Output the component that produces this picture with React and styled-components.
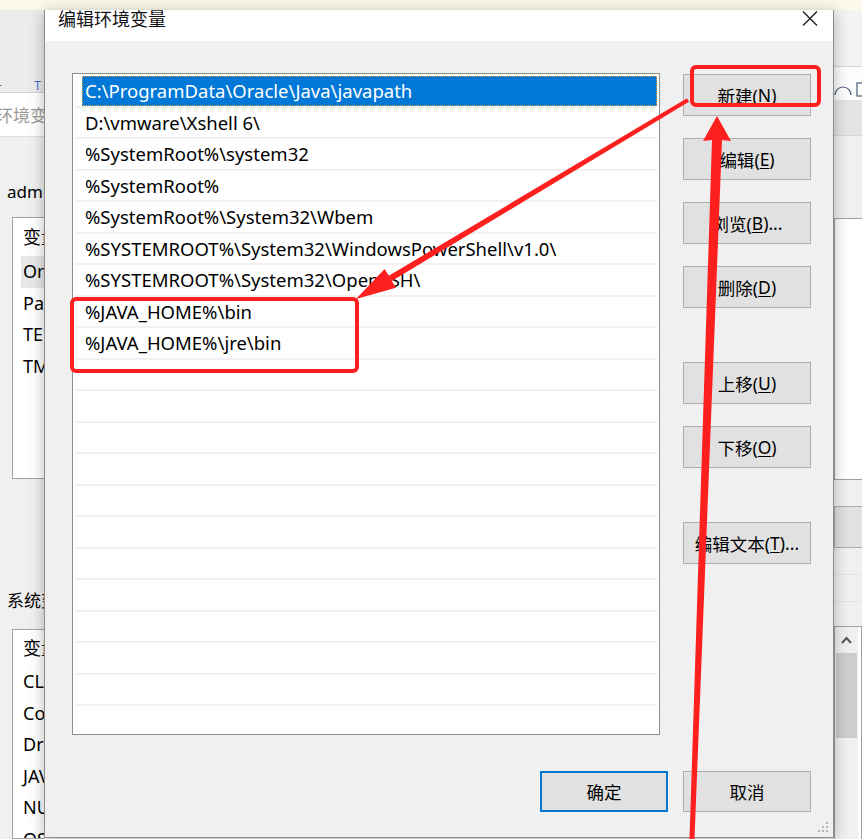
import React from "react";
import styled, { createGlobalStyle } from "styled-components";

const UI_FONT = `"Noto Sans", "Noto Sans CJK SC", sans-serif`;
const RED = "#fe1f1f";

const GlobalStyle = createGlobalStyle`
  html, body {
    margin: 0;
    padding: 0;
  }
  body {
    background: #f0f0f0;
    font-family: ${UI_FONT};
  }
`;

const paths = [
  "C:\\ProgramData\\Oracle\\Java\\javapath",
  "D:\\vmware\\Xshell 6\\",
  "%SystemRoot%\\system32",
  "%SystemRoot%",
  "%SystemRoot%\\System32\\Wbem",
  "%SYSTEMROOT%\\System32\\WindowsPowerShell\\v1.0\\",
  "%SYSTEMROOT%\\System32\\OpenSSH\\",
  "%JAVA_HOME%\\bin",
  "%JAVA_HOME%\\jre\\bin",
];
const ROW_COUNT = 21;

const sideButtons = [
  { label: "新建", key: "N" },
  { label: "编辑", key: "E" },
  { label: "浏览", key: "B", more: true },
  { label: "删除", key: "D" },
  { label: "上移", key: "U", spaced: true },
  { label: "下移", key: "O" },
  { label: "编辑文本", key: "T", more: true, spaced: true },
];

const userVars = ["OneDrive", "Path", "TEMP", "TMP"];
const sysVars = ["CLASSPATH", "ComSpec", "DriverData", "JAVA_HOME", "NUMBER_OF_PROCESSORS", "OS"];

const App = () => {
  return (
    <Page>
      <GlobalStyle />
      <TopStrip />
      <Desktop>
        <LeftPane>
          <BackToolbar>
            <span className="dash">-</span>
            <span className="glyph">T</span>
          </BackToolbar>
          <BackSearch>
            <span>环境变量</span>
          </BackSearch>
          <BackBody>
            <BackLabel $top={45}>admin 的用户变量(U)</BackLabel>
            <BackList $top={15} $height={262}>
              <BackRow $header $h={38}>变量</BackRow>
              {userVars.map((v, i) => (
                <BackRow key={v} $active={i === 0}>
                  {v}
                </BackRow>
              ))}
            </BackList>
            <BackLabel $top={112}>系统变量(S)</BackLabel>
            <BackList $top={18} $grow>
              <BackRow $header $h={36}>变量</BackRow>
              {sysVars.map((v) => (
                <BackRow key={v}>{v}</BackRow>
              ))}
            </BackList>
          </BackBody>
        </LeftPane>

        <Dialog>
          <TitleBar>
            <Title>编辑环境变量</Title>
            <CloseIcon width="16" height="15" viewBox="0 0 16 15">
              <path d="M1 0.5 L15 14.5 M15 0.5 L1 14.5" stroke="#1e1e1e" strokeWidth="1.4" />
            </CloseIcon>
          </TitleBar>
          <Body>
            <MainRow>
              <PathList>
                {Array.from({ length: ROW_COUNT }).map((_, i) => (
                  <PathRow key={i}>
                    <PathCell $selected={i === 0}>{paths[i] || ""}</PathCell>
                  </PathRow>
                ))}
              </PathList>
              <ButtonColumn>
                {sideButtons.map((b) => (
                  <SideButton key={b.key} $spaced={b.spaced}>
                    {b.label}(<u>{b.key}</u>){b.more ? "..." : ""}
                  </SideButton>
                ))}
              </ButtonColumn>
            </MainRow>
            <Footer>
              <FooterButton $primary>确定</FooterButton>
              <FooterButton>取消</FooterButton>
            </Footer>
          </Body>
          <Grip width="13" height="12" viewBox="0 0 13 12">
            <g fill="#b4b4b4">
              <rect x="10" y="0" width="2" height="2" />
              <rect x="6" y="4" width="2" height="2" />
              <rect x="10" y="4" width="2" height="2" />
              <rect x="2" y="8" width="2" height="2" />
              <rect x="6" y="8" width="2" height="2" />
              <rect x="10" y="8" width="2" height="2" />
            </g>
          </Grip>
        </Dialog>

        <RightPane>
          <RBand $h={57} $bg="#f3f3f3" $line="#d6d6d6" />
          <RBand $h={33} $bg="#fdfdfd">
            <svg width="28" height="33" viewBox="0 0 28 33">
              <path d="M1 28 A8 8 0 0 1 17 28" fill="none" stroke="#4a5a78" strokeWidth="1.2" />
              <rect x="23" y="16" width="8" height="13" fill="none" stroke="#4a5a78" strokeWidth="1.2" />
            </svg>
          </RBand>
          <RBand $h={36} $bg="#e4e4e4" $line="#d8d8d8" />
          <RBand $h={82} />
          <RList $h={262} />
          <RBand $h={26} />
          <RButton />
          <RBand $h={27} $line="#e2e2e2" />
          <RBand $h={27} $line="#e2e2e2" />
          <RBand $h={24} />
          <RScrollList>
            <ScrollBar>
              <ScrollArrow width="23" height="24" viewBox="0 0 23 24">
                <path d="M7 16 L11.5 11 L16 16" fill="none" stroke="#555" strokeWidth="2" />
              </ScrollArrow>
              <ScrollThumb />
            </ScrollBar>
          </RScrollList>
        </RightPane>
      </Desktop>

      <Annotations width="862" height="839" viewBox="0 0 862 839">
        <rect x="692" y="67" width="127" height="38" rx="4" fill="none" stroke={RED} strokeWidth="4" />
        <rect x="72" y="299" width="285" height="72" rx="4" fill="none" stroke={RED} strokeWidth="4" />
        <polygon
          fill={RED}
          points="687,98.3 689,101.7 391.8,281 396,287.8 356,299 384.6,269 388.8,275.8"
        />
        <polygon
          fill={RED}
          points="717,116 731,141 722,140 694.5,839 689.5,839 712,140 703,141"
        />
      </Annotations>
    </Page>
  );
};

const Page = styled.div`
  position: relative;
  width: 862px;
  height: 839px;
  overflow: hidden;
  background: #f0f0f0;
  font-family: ${UI_FONT};
  color: #000;
`;

const TopStrip = styled.div`
  height: 10px;
  background: #fcf9ec;
`;

const Desktop = styled.div`
  display: flex;
  align-items: flex-start;
  height: 829px;
`;

/* background window, left part */
const LeftPane = styled.div`
  width: 44px;
  height: 829px;
  flex-shrink: 0;
  display: flex;
  flex-direction: column;
  overflow: hidden;
  background: #f0f0f0;
`;

const BackToolbar = styled.div`
  height: 83px;
  box-sizing: border-box;
  background: #ececec;
  border-bottom: 1px solid #d2d2d2;
  display: flex;
  align-items: flex-end;
  justify-content: space-between;
  padding: 0 3px 0 0;
  .dash {
    font-size: 12px;
    color: #666;
    line-height: 14px;
    margin-left: -2px;
  }
  .glyph {
    font-size: 12px;
    color: #3d6fd6;
    line-height: 12px;
  }
`;

const BackSearch = styled.div`
  height: 44px;
  box-sizing: border-box;
  padding-top: 3px;
  background: #fff;
  border-bottom: 1px solid #dedede;
  font-size: 17px;
  line-height: 40px;
  color: #9a9a9a;
  white-space: nowrap;
  span {
    margin-left: -4px;
  }
`;

const BackBody = styled.div`
  flex: 1;
  display: flex;
  flex-direction: column;
  padding-left: 7px;
  min-height: 0;
`;

const BackLabel = styled.div`
  margin-top: ${(p) => p.$top}px;
  height: 20px;
  line-height: 20px;
  font-size: 17px;
  white-space: nowrap;
`;

const BackList = styled.div`
  margin-top: ${(p) => p.$top}px;
  margin-left: 5px;
  ${(p) => (p.$grow ? "flex: 1;" : `height: ${p.$height}px;`)}
  box-sizing: border-box;
  border: 1px solid #a3a3a3;
  border-right: none;
  background: #fff;
  overflow: hidden;
`;

const BackRow = styled.div`
  height: ${(p) => p.$h || 31.5}px;
  line-height: ${(p) => p.$h || 31.5}px;
  margin-left: 8px;
  padding-left: 2px;
  font-size: 18px;
  white-space: nowrap;
  background: ${(p) => (p.$active ? "#e8e8e8" : "transparent")};
`;

/* the dialog in front */
const Dialog = styled.div`
  position: relative;
  z-index: 1;
  width: 790px;
  height: 828px;
  flex-shrink: 0;
  box-sizing: border-box;
  border: 1px solid #8c8c8c;
  border-top: none;
  display: flex;
  flex-direction: column;
  background: #f0f0f0;
  box-shadow: 0 2px 14px rgba(0, 0, 0, 0.28);
`;

const TitleBar = styled.div`
  height: 31px;
  flex-shrink: 0;
  background: #fff;
  display: flex;
  align-items: flex-start;
  justify-content: space-between;
  padding: 0 15px 0 13px;
`;

const Title = styled.div`
  font-size: 18px;
  line-height: 18px;
  color: #111;
`;

const CloseIcon = styled.svg`
  margin-top: 1px;
`;

const Body = styled.div`
  flex: 1;
  min-height: 0;
  display: flex;
  flex-direction: column;
  padding: 32px 22px 25px 27px;
`;

const MainRow = styled.div`
  flex: 1;
  min-height: 0;
  display: flex;
  gap: 23px;
`;

const PathList = styled.div`
  width: 588px;
  box-sizing: border-box;
  border: 1px solid #8f8f8f;
  background: #fff;
  padding: 2px 2px 0;
  overflow: hidden;
`;

const PathRow = styled.div`
  height: 31.5px;
  box-sizing: border-box;
  border-bottom: 2px solid #f1f1f1;
  display: flex;
`;

const PathCell = styled.div`
  flex: 1;
  margin-left: 7px;
  padding-left: 3px;
  font-size: 18.5px;
  line-height: 30px;
  white-space: nowrap;
  color: ${(p) => (p.$selected ? "#fff" : "#000")};
  background: ${(p) => (p.$selected ? "#0078d7" : "transparent")};
  ${(p) => (p.$selected ? "outline: 1px dotted #f0a050; outline-offset: -1px;" : "")}
`;

const ButtonColumn = styled.div`
  width: 128px;
  flex-shrink: 0;
  display: flex;
  flex-direction: column;
  gap: 22px;
  padding-top: 1px;
`;

const SideButton = styled.div`
  height: 42px;
  box-sizing: border-box;
  margin-top: ${(p) => (p.$spaced ? 32 : 0)}px;
  background: #e1e1e1;
  border: 1px solid #adadad;
  display: flex;
  align-items: center;
  justify-content: center;
  font-size: 17.5px;
  white-space: nowrap;
  u {
    text-underline-offset: 2px;
  }
`;

const Footer = styled.div`
  margin-top: 36px;
  display: flex;
  justify-content: flex-end;
  gap: 15px;
`;

const FooterButton = styled.div`
  width: 128px;
  height: 41px;
  box-sizing: border-box;
  background: #e1e1e1;
  border: ${(p) => (p.$primary ? "2px solid #0078d7" : "1px solid #adadad")};
  display: flex;
  align-items: center;
  justify-content: center;
  font-size: 17.5px;
`;

const Grip = styled.svg`
  position: absolute;
  right: 4px;
  bottom: 3px;
`;

/* background window, right part */
const RightPane = styled.div`
  width: 28px;
  height: 829px;
  flex-shrink: 0;
  display: flex;
  flex-direction: column;
  overflow: hidden;
  background: #f0f0f0;
`;

const RBand = styled.div`
  height: ${(p) => p.$h}px;
  flex-shrink: 0;
  box-sizing: border-box;
  background: ${(p) => p.$bg || "#f0f0f0"};
  ${(p) => (p.$line ? `border-bottom: 1px solid ${p.$line};` : "")}
  overflow: hidden;
`;

const RList = styled.div`
  height: ${(p) => p.$h}px;
  flex-shrink: 0;
  box-sizing: border-box;
  background: #fff;
  border: 1px solid #a0a0a0;
  border-right: none;
`;

const RButton = styled.div`
  height: 42px;
  flex-shrink: 0;
  box-sizing: border-box;
  background: #e1e1e1;
  border: 1px solid #adadad;
  border-right: none;
`;

const RScrollList = styled.div`
  flex: 1;
  box-sizing: border-box;
  background: #fff;
  border: 1px solid #a0a0a0;
  border-bottom: none;
  display: flex;
`;

const ScrollBar = styled.div`
  width: 23px;
  background: #f0f0f0;
  display: flex;
  flex-direction: column;
`;

const ScrollArrow = styled.svg`
  display: block;
`;

const ScrollThumb = styled.div`
  height: 85px;
  margin: 2px 1px 0;
  background: #cdcdcd;
`;

const Annotations = styled.svg`
  position: absolute;
  left: 0;
  top: 0;
  z-index: 2;
  pointer-events: none;
`;

export default App;
